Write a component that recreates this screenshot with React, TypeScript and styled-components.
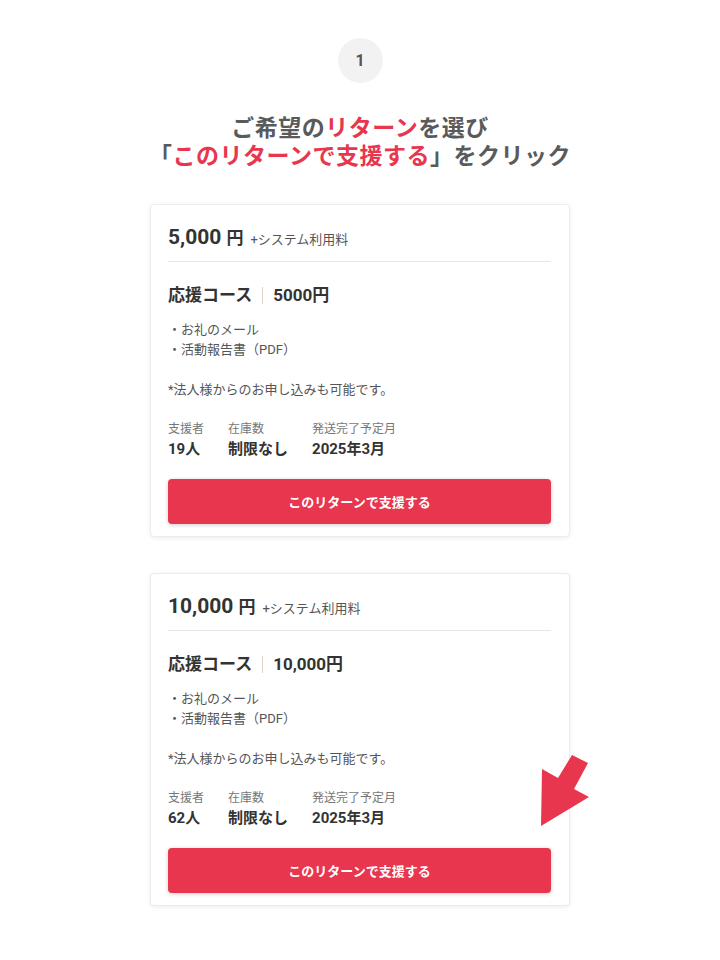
import React from 'react';
import styled, { createGlobalStyle } from 'styled-components';

interface Reward {
  price: string;
  course: string;
  items: string[];
  backers: string;
  stock: string;
  ship: string;
}

const rewards: Reward[] = [
  {
    price: '5,000',
    course: '5000円',
    items: ['お礼のメール', '活動報告書（PDF）'],
    backers: '19人',
    stock: '制限なし',
    ship: '2025年3月',
  },
  {
    price: '10,000',
    course: '10,000円',
    items: ['お礼のメール', '活動報告書（PDF）'],
    backers: '62人',
    stock: '制限なし',
    ship: '2025年3月',
  },
];

const RED = '#e8364f';

const GlobalStyle = createGlobalStyle`
  body {
    margin: 0;
    background: #fff;
    font-family: Roboto, "Noto Sans CJK JP", sans-serif;
    color: #333;
  }
`;

const Arrow = () => (
  <ArrowMark width="50" height="74" viewBox="0 0 50 74">
    <polygon points="2,15 18,24 32,1 48,9 34,35 49,43 1,72" fill={RED} />
  </ArrowMark>
);

const RewardCard = ({ reward, pointed }: { reward: Reward; pointed?: boolean }) => (
  <Card>
    <PriceRow>
      <Price>{reward.price}</Price>
      <Yen>円</Yen>
      <Fee>+システム利用料</Fee>
    </PriceRow>
    <Divider />
    <CourseTitle>
      応援コース<Sep />
      {reward.course}
    </CourseTitle>
    <ItemList>
      {reward.items.map((item) => (
        <li key={item}>・{item}</li>
      ))}
    </ItemList>
    <Note>*法人様からのお申し込みも可能です。</Note>
    <Stats>
      <Stat>
        <StatLabel>支援者</StatLabel>
        <StatValue>{reward.backers}</StatValue>
      </Stat>
      <Stat>
        <StatLabel>在庫数</StatLabel>
        <StatValue>{reward.stock}</StatValue>
      </Stat>
      <Stat>
        <StatLabel>発送完了予定月</StatLabel>
        <StatValue>{reward.ship}</StatValue>
      </Stat>
    </Stats>
    <SupportButton>このリターンで支援する</SupportButton>
    {pointed && <Arrow />}
  </Card>
);

const App = () => (
  <>
    <GlobalStyle />
    <Page>
      <StepBadge>1</StepBadge>
      <Heading>
        <HeadLine>
          ご希望の<Accent>リターン</Accent>を選び
        </HeadLine>
        <HeadLine>
          「<Accent>このリターンで支援する</Accent>」をクリック
        </HeadLine>
      </Heading>
      <CardList>
        {rewards.map((r, i) => (
          <RewardCard key={r.price} reward={r} pointed={i === rewards.length - 1} />
        ))}
      </CardList>
    </Page>
  </>
);

export default App;

const Page = styled.div`
  width: 720px;
  min-height: 960px;
  display: flex;
  flex-direction: column;
  align-items: center;
  padding-top: 38px;
  box-sizing: border-box;
`;

const StepBadge = styled.div`
  width: 45px;
  height: 45px;
  border-radius: 50%;
  background: #f2f2f2;
  color: #555;
  font-weight: 700;
  font-size: 16px;
  display: flex;
  align-items: center;
  justify-content: center;
`;

const Heading = styled.h2`
  margin: 29px 0 0;
  text-align: center;
  font-family: "Noto Sans CJK JP", sans-serif;
  font-size: 23px;
  font-weight: 700;
  color: #5a5a5a;
  letter-spacing: 0.5px;
  display: flex;
  flex-direction: column;
`;

const HeadLine = styled.span`
  display: block;
  height: 28px;
  line-height: 28px;
`;

const Accent = styled.span`
  color: ${RED};
`;

const CardList = styled.div`
  margin-top: 36px;
  display: flex;
  flex-direction: column;
  gap: 36px;
`;

const Card = styled.div`
  position: relative;
  width: 420px;
  box-sizing: border-box;
  padding: 18px 18px 12px 17px;
  background: #fff;
  border: 1px solid #ececec;
  border-radius: 4px;
  box-shadow: 0 1px 4px rgba(0, 0, 0, 0.08);
`;

const PriceRow = styled.div`
  display: flex;
  align-items: baseline;
  height: 28px;
  line-height: 28px;
`;

const Price = styled.span`
  font-size: 21px;
  font-weight: 700;
  color: #333;
`;

const Yen = styled.span`
  margin-left: 5px;
  font-family: "Noto Sans CJK JP", sans-serif;
  font-size: 17px;
  font-weight: 700;
  color: #333;
`;

const Fee = styled.span`
  margin-left: 7px;
  font-size: 13px;
  color: #555;
`;

const Divider = styled.hr`
  margin: 10px 0 0;
  border: none;
  border-top: 1px solid #e6e6e6;
`;

const CourseTitle = styled.div`
  margin-top: 20px;
  display: flex;
  align-items: center;
  font-size: 17px;
  line-height: 26px;
  font-weight: 700;
  color: #333;
`;

const Sep = styled.span`
  display: inline-block;
  width: 1px;
  height: 17px;
  margin: 0 10px;
  background: #ddd4c8;
`;

const ItemList = styled.ul`
  margin: 12px 0 0;
  padding: 0;
  list-style: none;
  font-size: 13px;
  line-height: 20px;
  color: #555;
`;

const Note = styled.p`
  margin: 20px 0 0;
  font-size: 13px;
  line-height: 20px;
  color: #555;
`;

const Stats = styled.div`
  margin-top: 20px;
  display: flex;
  gap: 24px;
`;

const Stat = styled.div`
  display: flex;
  flex-direction: column;
`;

const StatLabel = styled.span`
  font-size: 12px;
  line-height: 18px;
  color: #777;
`;

const StatValue = styled.span`
  font-size: 15px;
  line-height: 22px;
  font-weight: 700;
  color: #333;
`;

const SupportButton = styled.button`
  margin-top: 19px;
  width: 100%;
  height: 45px;
  border: none;
  border-radius: 4px;
  background: ${RED};
  color: #fff;
  font-family: "Noto Sans CJK JP", sans-serif;
  font-size: 13px;
  font-weight: 700;
  box-shadow: 0 1px 4px rgba(0, 0, 0, 0.2);
  cursor: pointer;
`;

const ArrowMark = styled.svg`
  position: absolute;
  left: 389px;
  top: 180px;
`;
